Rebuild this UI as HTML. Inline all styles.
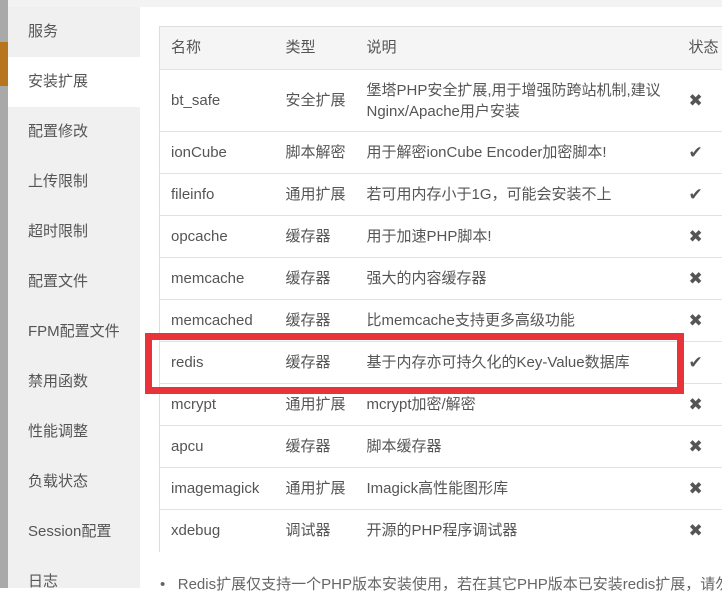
<!DOCTYPE html>
<html><head><meta charset="utf-8"><style>
*{margin:0;padding:0;box-sizing:border-box}
body{width:722px;height:588px;overflow:hidden;background:#fff;font-family:"Liberation Sans","Noto Sans CJK SC",sans-serif;font-size:15px;color:#555;position:relative}
.strip{position:absolute;left:0;top:0;width:8px;height:588px;background:#a9a9a9}
.orange{position:absolute;left:0;top:42px;width:8px;height:44px;background:#b8741e}
.top{position:absolute;left:8px;top:0;width:714px;height:7px;background:#f3f3f3}
.side{position:absolute;left:8px;top:7px;width:132px;height:581px;background:#f0f0f1}
.side div{height:50px;line-height:50px;padding-left:20px;color:#555;font-size:15px}
.side div.act{background:#fff}
table{position:absolute;left:159px;top:26px;width:580px;border-collapse:collapse;border-left:1px solid #ddd;border-top:1px solid #ddd}
td,th{border-bottom:1px solid #e2e2e2;text-align:left;font-weight:normal;padding:0 0 0 11px;height:42px;line-height:20px;vertical-align:middle;color:#555;white-space:nowrap}
td span,th span{vertical-align:middle}
th{background:#f5f5f5;height:43px}
.c1{width:115px}.c2{width:81px}.c3{width:318px}
.s{font-size:17px;color:#555;padding-left:15px}
.box{position:absolute;left:145px;top:333px;width:539px;height:61px;border:7px solid #e9333a}
.note{position:absolute;left:160px;top:573px;color:#666;font-size:15px;white-space:nowrap}
</style></head><body>
<div class="strip"></div><div class="orange"></div><div class="top"></div>
<div class="side">
<div>服务</div><div class="act">安装扩展</div><div>配置修改</div><div>上传限制</div><div>超时限制</div><div>配置文件</div><div>FPM配置文件</div><div>禁用函数</div><div>性能调整</div><div>负载状态</div><div>Session配置</div><div>日志</div>
</div>
<table>
<tr><th class="c1">名称</th><th class="c2">类型</th><th class="c3">说明</th><th style="padding-left:15px">状态</th></tr>
<tr><td style="height:62px">bt_safe</td><td>安全扩展</td><td style="line-height:21px;white-space:normal">堡塔PHP安全扩展,用于增强防跨站机制,建议Nginx/Apache用户安装</td><td class="s">✖</td></tr>
<tr><td>ionCube</td><td>脚本解密</td><td>用于解密ionCube Encoder加密脚本!</td><td class="s">✔</td></tr>
<tr><td>fileinfo</td><td>通用扩展</td><td>若可用内存小于1G，可能会安装不上</td><td class="s">✔</td></tr>
<tr><td>opcache</td><td>缓存器</td><td>用于加速PHP脚本!</td><td class="s">✖</td></tr>
<tr><td>memcache</td><td>缓存器</td><td>强大的内容缓存器</td><td class="s">✖</td></tr>
<tr><td>memcached</td><td>缓存器</td><td>比memcache支持更多高级功能</td><td class="s">✖</td></tr>
<tr><td>redis</td><td>缓存器</td><td>基于内存亦可持久化的Key-Value数据库</td><td class="s">✔</td></tr>
<tr><td>mcrypt</td><td>通用扩展</td><td>mcrypt加密/解密</td><td class="s">✖</td></tr>
<tr><td>apcu</td><td>缓存器</td><td>脚本缓存器</td><td class="s">✖</td></tr>
<tr><td>imagemagick</td><td>通用扩展</td><td>Imagick高性能图形库</td><td class="s">✖</td></tr>
<tr><td style="border-bottom:none">xdebug</td><td style="border-bottom:none">调试器</td><td style="border-bottom:none">开源的PHP程序调试器</td><td class="s" style="border-bottom:none">✖</td></tr>
</table>
<div class="box"></div>
<div class="note">•&nbsp;&nbsp;&nbsp;Redis扩展仅支持一个PHP版本安装使用，若在其它PHP版本已安装redis扩展，请勿</div>
</body></html>
